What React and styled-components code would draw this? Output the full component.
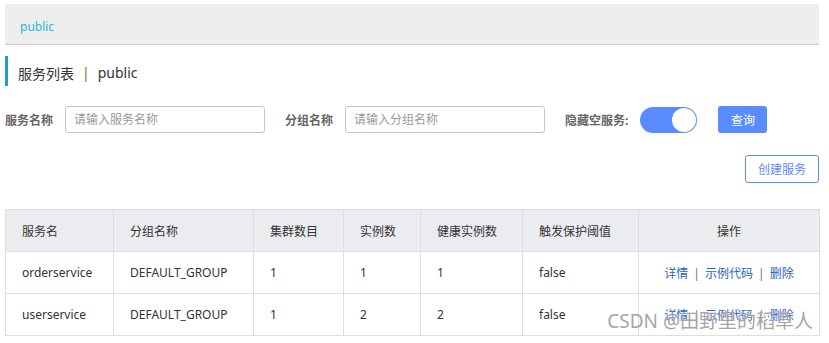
import React from "react"
import styled, { createGlobalStyle } from "styled-components"

const GlobalStyle = createGlobalStyle`
  html, body {
    margin: 0;
    padding: 0;
    background: #fff;
  }
  body {
    font-family: "Noto Sans", "Noto Sans CJK SC", sans-serif;
    color: #333;
  }
`

const Page = styled.div`
  position: relative;
  width: 829px;
  height: 343px;
  box-sizing: border-box;
  padding: 4px 10px 0 5px;
  overflow: hidden;
`

const Breadcrumb = styled.div`
  box-sizing: border-box;
  height: 41px;
  background: #eeeeee;
  border-bottom: 1px solid #cfcfcf;
  display: flex;
  align-items: center;
  padding: 5px 0 0 15px;
  font-size: 12px;
  color: #1fb9da;
`

const Title = styled.div`
  margin-top: 11px;
  height: 30px;
  box-sizing: border-box;
  border-left: 3px solid #1d9ecf;
  padding: 3px 0 0 10px;
  display: flex;
  align-items: center;
  font-size: 14px;
  color: #333;
`

const Divider = styled.span`
  margin: 0 8px;
  color: #8a6a2a;
`

const SearchRow = styled.div`
  margin-top: 20px;
  display: flex;
  align-items: center;
  height: 27px;
`

const Label = styled.span`
  font-size: 12px;
  font-weight: bold;
  color: #666;
  margin-right: 12px;
  white-space: nowrap;
`

const Input = styled.input`
  box-sizing: border-box;
  width: 200px;
  height: 27px;
  border: 1px solid #c4c6cf;
  border-radius: 3px;
  padding: 0 8px;
  font-size: 12px;
  font-family: inherit;
  margin-right: 20px;
  outline: none;
  &::placeholder {
    color: #999;
  }
`

const Switch = styled.div`
  box-sizing: border-box;
  width: 57px;
  height: 26px;
  border-radius: 13px;
  background: #5a8cff;
  display: flex;
  justify-content: flex-end;
  align-items: center;
  padding: 1px;
  margin-right: 21px;
`

const Knob = styled.div`
  width: 24px;
  height: 24px;
  border-radius: 50%;
  background: #fff;
`

const PrimaryButton = styled.button`
  width: 49px;
  height: 27px;
  border: none;
  border-radius: 3px;
  background: #5a8cff;
  color: #fff;
  font-size: 12px;
  font-family: inherit;
  padding: 0;
`

const ActionRow = styled.div`
  margin-top: 22px;
  display: flex;
  justify-content: flex-end;
`

const OutlineButton = styled.button`
  width: 74px;
  height: 28px;
  border: 1px solid #5a8cff;
  border-radius: 3px;
  background: #fff;
  color: #5a8cff;
  font-size: 12px;
  font-family: inherit;
  padding: 0;
`

const Table = styled.table`
  margin-top: 26px;
  width: 814px;
  border-collapse: collapse;
  table-layout: fixed;
  font-size: 12px;
  border: 1px solid #dcdee3;
`

const Th = styled.th`
  height: 41px;
  background: #ebecf0;
  border: 1px solid #dcdee3;
  font-weight: normal;
  color: #333;
  text-align: ${(p) => (p.$center ? "center" : "left")};
  padding: ${(p) => (p.$center ? "0" : "0 0 0 16px")};
`

const Td = styled.td`
  height: 41px;
  border: 1px solid #dcdee3;
  color: #333;
  text-align: ${(p) => (p.$center ? "center" : "left")};
  padding: ${(p) => (p.$center ? "0" : "0 0 0 16px")};
`

const Link = styled.a`
  color: #2a64c5;
  cursor: pointer;
`

const Sep = styled.span`
  margin: 0 5px;
  color: #8a6a5a;
`

const Watermark = styled.div`
  position: absolute;
  right: 16px;
  bottom: 9px;
  font-size: 19px;
  color: rgba(140, 140, 140, 0.8);
  text-shadow: 0 0 1px #fff;
  pointer-events: none;
  white-space: nowrap;
`

const columns = [
  { title: "服务名", width: 108 },
  { title: "分组名称", width: 140 },
  { title: "集群数目", width: 90 },
  { title: "实例数", width: 77 },
  { title: "健康实例数", width: 102 },
  { title: "触发保护阈值", width: 116 },
  { title: "操作", width: 181, center: true },
]

const rows = [
  ["orderservice", "DEFAULT_GROUP", "1", "1", "1", "false"],
  ["userservice", "DEFAULT_GROUP", "1", "2", "2", "false"],
]

const App = () => {
  return (
    <Page>
      <GlobalStyle />
      <Breadcrumb>public</Breadcrumb>
      <Title>
        服务列表<Divider>|</Divider>public
      </Title>
      <SearchRow>
        <Label>服务名称</Label>
        <Input placeholder="请输入服务名称" />
        <Label>分组名称</Label>
        <Input placeholder="请输入分组名称" />
        <Label>隐藏空服务:</Label>
        <Switch>
          <Knob />
        </Switch>
        <PrimaryButton>查询</PrimaryButton>
      </SearchRow>
      <ActionRow>
        <OutlineButton>创建服务</OutlineButton>
      </ActionRow>
      <Table>
        <colgroup>
          {columns.map((c) => (
            <col key={c.title} style={{ width: c.width }} />
          ))}
        </colgroup>
        <thead>
          <tr>
            {columns.map((c) => (
              <Th key={c.title} $center={c.center}>
                {c.title}
              </Th>
            ))}
          </tr>
        </thead>
        <tbody>
          {rows.map((r) => (
            <tr key={r[0]}>
              {r.map((cell, i) => (
                <Td key={i}>{cell}</Td>
              ))}
              <Td $center>
                <Link>详情</Link>
                <Sep>|</Sep>
                <Link>示例代码</Link>
                <Sep>|</Sep>
                <Link>删除</Link>
              </Td>
            </tr>
          ))}
        </tbody>
      </Table>
      <Watermark>CSDN @田野里的稻草人</Watermark>
    </Page>
  )
}

export default App
